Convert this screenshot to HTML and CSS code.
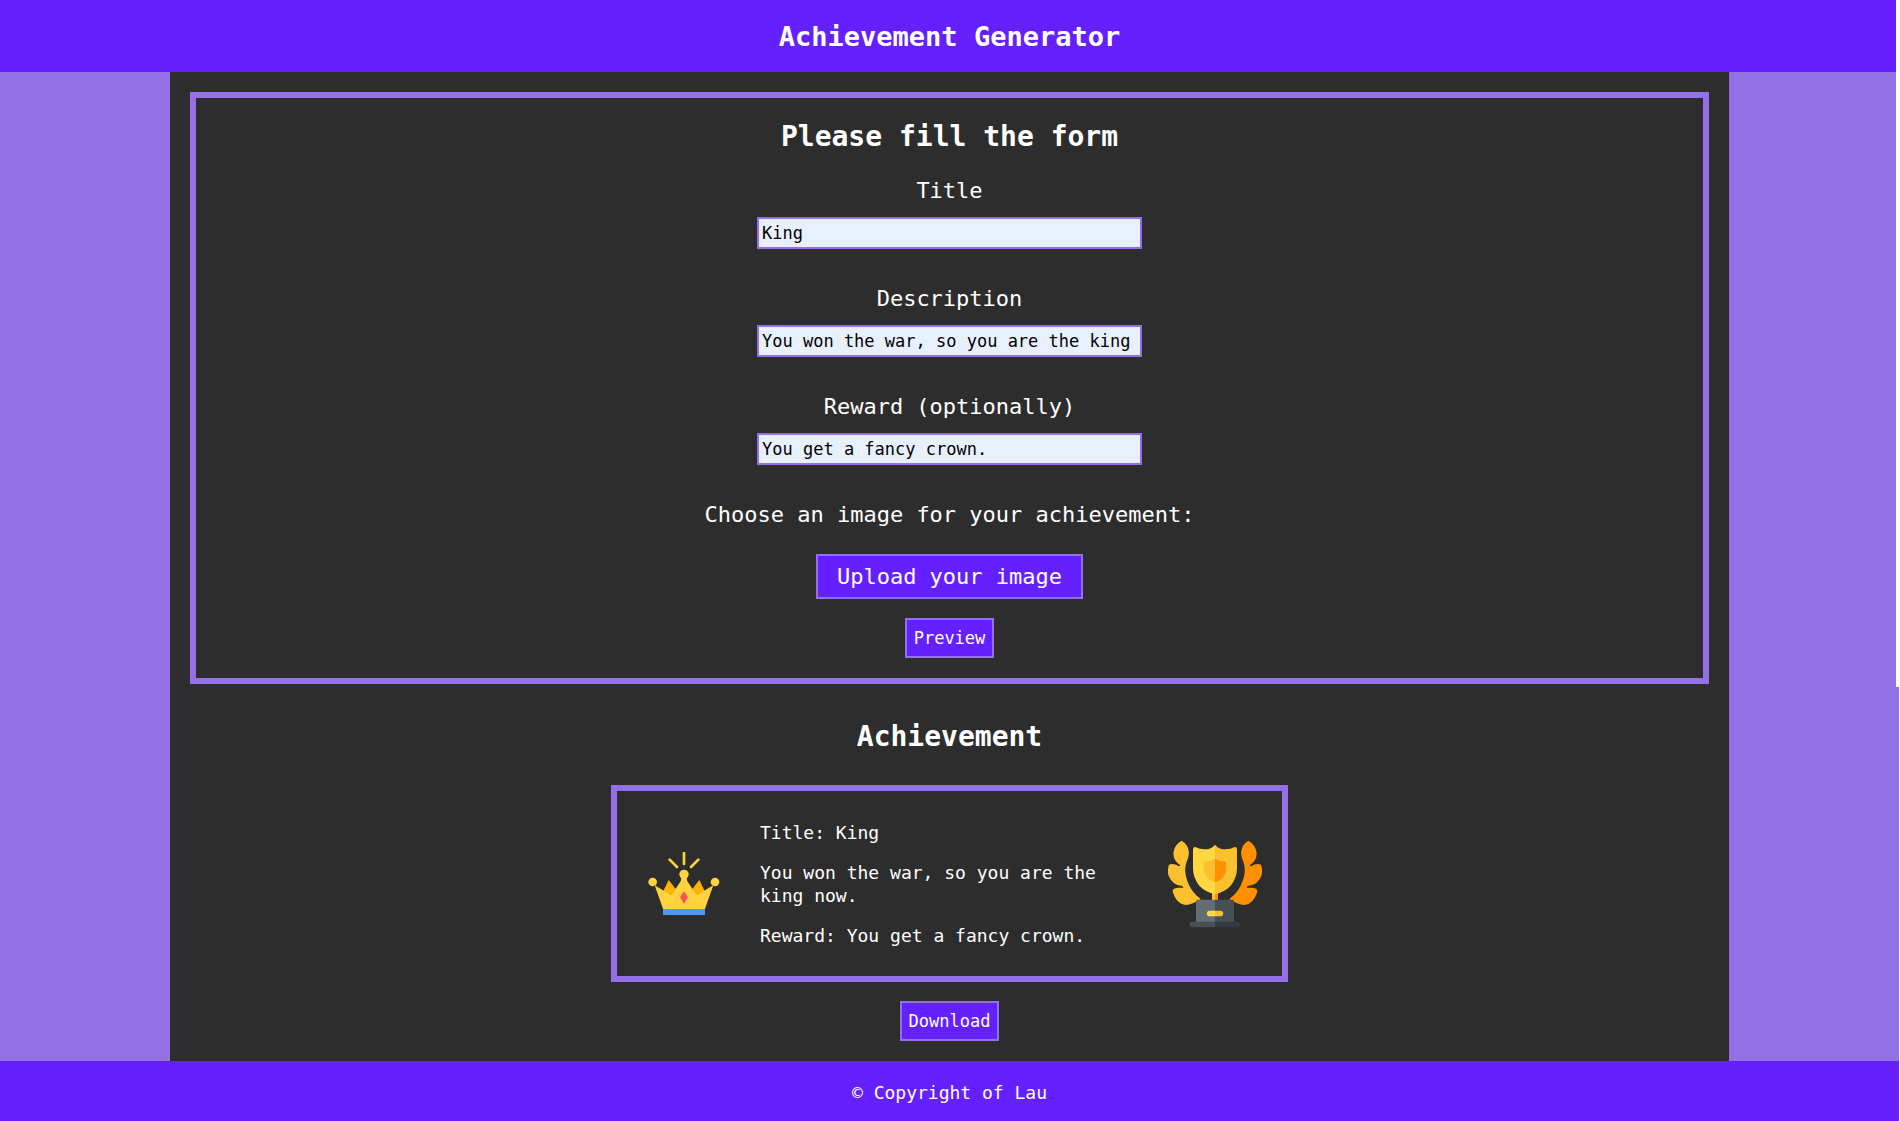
FILE: index.html
```html
<!DOCTYPE html>
<html lang="en">
<head>
  <meta charset="utf-8">
  <meta name="viewport" content="width=device-width, initial-scale=1">
  <title>Achievement Generator</title>
  <link rel="stylesheet" href="styles.css">
</head>
<body>
  <header class="site-header">
    <h1 class="site-title">Achievement Generator</h1>
  </header>

  <main class="content">
    <form class="form">
      <h2 class="heading">Please fill the form</h2>
      <div class="field">
        <label class="label" for="title">Title</label>
        <input class="input" id="title" type="text" value="King">
      </div>
      <div class="field">
        <label class="label" for="description">Description</label>
        <input class="input" id="description" type="text" value="You won the war, so you are the king now.">
      </div>
      <div class="field">
        <label class="label" for="reward">Reward (optionally)</label>
        <input class="input" id="reward" type="text" value="You get a fancy crown.">
      </div>
      <p class="label">Choose an image for your achievement:</p>
      <button class="button button-upload" type="button">Upload your image</button>
      <button class="button" type="button">Preview</button>
    </form>

    <section class="result">
      <h2 class="heading">Achievement</h2>
      <article class="card">
        <svg class="crown" viewBox="84 155 216 192" aria-hidden="true">
          <path d="M192 158V191M149 178L171 200M235 178L213 200" fill="none" stroke="#ffd33f" stroke-width="8" stroke-linecap="round"/>
          <path d="M130 272L146 239L170 270L155 290ZM254 272L238 239L214 270L229 290Z" fill="#ffb300"/>
          <path d="M130 328L104 255L154 285L182 243L186 226H198L202 243L230 285L280 255L254 328Z" fill="#ffd33f"/>
          <circle cx="98" cy="245" r="13" fill="#ffd33f"/>
          <circle cx="192" cy="222" r="14" fill="#ffd33f"/>
          <circle cx="285" cy="245" r="13" fill="#ffd33f"/>
          <path d="M192 273L204 291L192 310L180 291Z" fill="#ff5252"/>
          <path d="M129 327H255V344H129Z" fill="#4a98f7"/>
        </svg>
        <div class="details">
          <p>Title: King</p>
          <p>You won the war, so you are the king now.</p>
          <p>Reward: You get a fancy crown.</p>
        </div>
        <svg class="trophy" viewBox="84 120 282 264" aria-hidden="true">
          <path d="M125 122Q146 134 147 160Q146 172 139 188Q131 215 142 243Q153 276 182 297Q158 314 137 315Q109 312 98 275C97 264 112 262 130 264L127 258Q95 255 85 225Q82 208 87 194Q99 188 117 199L121 196Q100 183 100 159Q103 134 125 122Z" fill="#fbc02d"/>
          <path d="M325 122Q304 134 303 160Q304 172 311 188Q319 215 308 243Q297 276 268 297Q292 314 313 315Q341 312 352 275C353 264 338 262 320 264L323 258Q355 255 365 225Q368 208 363 194Q351 188 333 199L329 196Q350 183 350 159Q347 134 325 122Z" fill="#ff9100"/>
          <path d="M216 276H225V302H216Z" fill="#fbc02d"/>
          <path d="M225 276H234V302H225Z" fill="#ff9100"/>
          <path d="M225 134Q214 148 194 148Q178 148 168 142Q159 139 159 149V205Q159 234 178 257Q197 277 225 282Z" fill="#ffd740"/>
          <path d="M225 134Q236 148 256 148Q272 148 282 142Q291 139 291 149V205Q291 234 272 257Q253 277 225 282Z" fill="#fbc02d"/>
          <path d="M225 175Q212 185 192 186V208Q194 238 225 247Z" fill="#fbc02d"/>
          <path d="M225 175Q238 185 258 186V208Q256 238 225 247Z" fill="#ff9100"/>
          <path d="M225 299H172Q168 299 168 304V367H225Z" fill="#656d74"/>
          <path d="M225 299H278Q282 299 282 304V367H225Z" fill="#485056"/>
          <path d="M225 365H158A8 8 0 0 0 158 382H225Z" fill="#485056"/>
          <path d="M225 365H292A8 8 0 0 1 292 382H225Z" fill="#333a40"/>
          <path d="M225 332H209A8 8 0 0 0 209 349H225Z" fill="#ffd740"/>
          <path d="M225 332H241A8 8 0 0 1 241 349H225Z" fill="#fbc02d"/>
        </svg>
      </article>
      <button class="button" type="button">Download</button>
    </section>
  </main>

  <footer class="site-footer">© Copyright of Lau</footer>
  <div class="scroll-edge" aria-hidden="true"></div>
</body>
</html>
```
FILE: styles.css
```css
:root {
  --violet: #6520ff;
  --lavender: #9370e6;
  --dark: #2d2d2d;
}

* {
  box-sizing: border-box;
}

html {
  background: #fff;
}

body {
  position: relative;
  display: flex;
  flex-direction: column;
  min-height: 100vh;
  margin: 0 1px 0 0;
  background: var(--lavender);
  color: #fff;
  font-family: "DejaVu Sans Mono", "Liberation Mono", monospace;
  font-size: 18px;
  line-height: 23px;
}

h1,
h2,
p {
  margin: 0;
}

.site-header {
  padding: 20px 20px 18px;
  background: var(--violet);
  text-align: center;
}

.site-title {
  font-size: 27px;
  line-height: 34px;
}

.content {
  flex: 1;
  margin: 0 170px;
  padding: 20px;
  background: var(--dark);
}

.form,
.result {
  display: flex;
  flex-direction: column;
  align-items: center;
}

.form {
  padding: 22px 20px 20px;
  border: 6px solid var(--lavender);
}

.heading {
  font-size: 28px;
  line-height: 34px;
}

.form .heading {
  margin-bottom: 23px;
}

.field {
  display: flex;
  flex-direction: column;
  align-items: center;
  gap: 12px;
  margin-bottom: 36px;
}

.label {
  font-size: 22px;
  line-height: 28px;
}

.input {
  width: 385px;
  height: 32px;
  padding: 0 3px;
  border: 2px solid var(--lavender);
  border-radius: 0;
  background: #e8f0fe;
  color: #000;
  font-family: inherit;
  font-size: 17px;
}

.button {
  height: 40px;
  padding: 0 7px;
  border: 2px solid var(--lavender);
  background: var(--violet);
  color: #fff;
  font-family: inherit;
  font-size: 17px;
}

.button-upload {
  height: 45px;
  margin: 25px 0 19px;
  padding: 0 19px;
  font-size: 22px;
}

.result {
  padding-top: 36px;
}

.card {
  display: grid;
  grid-template-columns: 72px 1fr 94px;
  align-items: center;
  column-gap: 40px;
  width: 100%;
  max-width: 677px;
  min-height: 197px;
  margin: 31px 0 19px;
  padding: 20px 20px 20px 31px;
  border: 6px solid var(--lavender);
}

.crown,
.trophy {
  display: block;
  width: 100%;
}

.details {
  display: grid;
  gap: 17px;
}

.site-footer {
  padding: 20px 20px 17px;
  background: var(--violet);
  text-align: center;
}

/* light strip along the upper right edge */
.scroll-edge {
  position: absolute;
  top: 0;
  right: 0;
  width: 3px;
  height: 687px;
  background: #fff;
}
```
